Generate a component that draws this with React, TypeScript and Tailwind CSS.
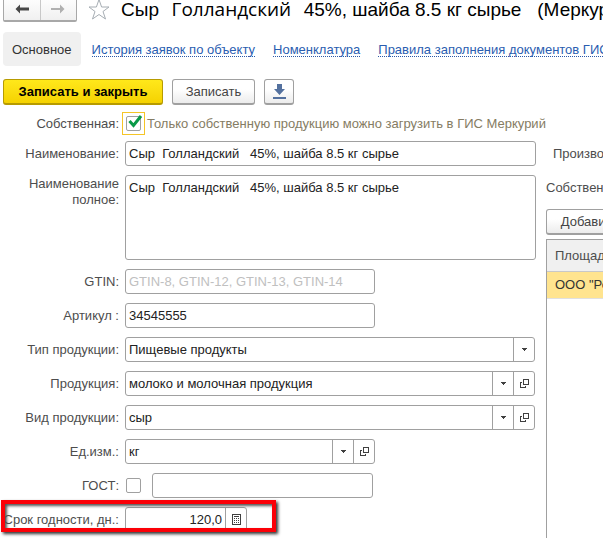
import type { ReactNode } from "react";

const buttonBase =
  "h-[26px] shrink-0 rounded-[3px] border border-[#a0a0a0] border-b-2 bg-linear-to-b from-white from-40% to-[#ececec] text-[#444]";
const fieldBox =
  "flex h-[25px] min-w-0 overflow-hidden rounded-[3px] border border-[#a0a0a0] bg-white";
const fieldText = "min-w-0 flex-1 bg-transparent px-[3px] text-[#222] outline-none";

function OpenIcon() {
  return (
    <svg width="9" height="9" viewBox="0 0 9 9" fill="none" stroke="#404040" shapeRendering="crispEdges" aria-hidden="true">
      <path d="M3.5 0.5H8.5V5.5H3.5Z" />
      <path d="M2 3.5H0.5V8.5H5.5V7" />
    </svg>
  );
}

function ArrowCell() {
  return (
    <span className="pointer-events-none flex w-[21px] shrink-0 items-center justify-center border-l border-[#a0a0a0]">
      <svg width="5" height="3" viewBox="0 0 5 3" fill="#404040" shapeRendering="crispEdges" aria-hidden="true">
        <path d="M0 0H5V1H4V2H3V3H2V2H1V1H0Z" />
      </svg>
    </span>
  );
}

function Row({ id, label, children }: { id: string; label: string; children: ReactNode }) {
  return (
    <div className="flex min-h-[25px] gap-[6px]">
      <label htmlFor={id} className="w-[119px] shrink-0 pt-[5px] text-right leading-4 whitespace-nowrap text-[#4d4d4d]">
        {label}
      </label>
      {children}
    </div>
  );
}

function SelectField({ id, value, open, width }: { id: string; value: string; open?: boolean; width: string }) {
  return (
    <div className={`${fieldBox} ${width}`}>
      <select id={id} className={`${fieldText} appearance-none`} defaultValue={value}>
        <option>{value}</option>
      </select>
      <ArrowCell />
      {open && (
        <button type="button" aria-label="Открыть" className="flex w-[21px] shrink-0 items-center justify-center border-l border-[#a0a0a0]">
          <OpenIcon />
        </button>
      )}
    </div>
  );
}

function Header() {
  return (
    <header className="flex h-[22px] items-end">
      <div className="ml-[3px] flex h-[26px] w-[74px] shrink-0 rounded-[2px] border border-b-2 border-[#a8a8a8] bg-linear-to-b from-white to-[#f0f0f0]">
        <button type="button" aria-label="Назад" className="flex flex-1 items-center justify-center border-r border-[#c8c8c8]">
          <svg width="14" height="10" viewBox="0 0 14 10" aria-hidden="true">
            <path d="M5 0.5L0.5 5L5 9.5V6.5H14V3.5H5Z" fill="#484848" />
          </svg>
        </button>
        <button type="button" aria-label="Вперед" className="flex flex-1 items-center justify-center">
          <svg width="14" height="10" viewBox="0 0 14 10" aria-hidden="true">
            <path d="M9 0.5L13.5 5L9 9.5V6H0V4H9Z" fill="#b0b0b0" />
          </svg>
        </button>
      </div>
      <button type="button" aria-label="В избранное" className="ml-[11px] shrink-0">
        <svg width="22" height="23" viewBox="0 0 22 23" fill="none" stroke="#a6adb3" aria-hidden="true">
          <path d="M11 0.500L13.6 8H21L15 12.500L17.5 20L11 15.500L4.5 20L7 12.500L1 8H8.4Z" />
        </svg>
      </button>
      <h1 className="ml-[11px] pb-[2px] text-[19px] leading-5 whitespace-pre text-black">
        Сыр{"  "}
        <span className="mx-[2px] font-['Open_Sans','Noto_Sans',sans-serif] leading-none font-medium">Голландский</span>
        {"  "}45%, шайба 8.5 кг сырье{"   "}(Меркурий)
      </h1>
    </header>
  );
}

const links = ["История заявок по объекту", "Номенклатура", "Правила заполнения документов ГИС"];

function Tabs() {
  return (
    <nav className="mt-[10px] flex h-[34px] items-center gap-[18px] pl-[3px] whitespace-nowrap">
      <span className="-mr-[7px] flex h-[34px] items-center rounded-[4px] bg-[#f0f0f0] px-[9px] pt-[2px] text-[#333]">Основное</span>
      {links.map((text) => (
        <a key={text} href="#" className="border-b border-dotted border-[#2a58a8] pt-[2px] leading-[12px] text-[#2a5db0]">
          {text}
        </a>
      ))}
    </nav>
  );
}

function Toolbar() {
  return (
    <div className="mt-[13px] flex gap-[9px] pl-[3px]">
      <button
        type="button"
        className="h-[26px] w-[160px] rounded-[3px] border border-b-2 border-[#b79b00] bg-linear-to-b from-[#ffe81a] to-[#f5d200] font-bold text-black"
      >
        Записать и закрыть
      </button>
      <button type="button" className={`${buttonBase} w-[83px]`}>Записать</button>
      <button type="button" aria-label="Загрузить" className={`${buttonBase} flex w-[30px] items-center justify-center`}>
        <svg width="13" height="15" viewBox="0 0 13 15" fill="#54719f" aria-hidden="true">
          <path d="M4 0H9V5H12L6.500 11L1 5H4Z" />
          <path d="M0 13H13V15H0Z" />
        </svg>
      </button>
    </div>
  );
}

const product = "Сыр  Голландский   45%, шайба 8.5 кг сырье";

function ProductForm() {
  return (
    <form className="flex w-[536px] shrink-0 flex-col gap-[9px]">
      <Row id="name" label="Наименование:">
        <div className={`${fieldBox} w-[411px]`}>
          <input id="name" className={fieldText} defaultValue={product} />
        </div>
      </Row>
      <div className="flex gap-[6px]">
        <label htmlFor="full" className="w-[119px] shrink-0 pt-px text-right leading-4 text-[#4d4d4d]">
          Наименование полное:
        </label>
        <textarea
          id="full"
          className="h-[85px] w-[411px] resize-none rounded-[3px] border border-[#a0a0a0] px-[3px] py-[4px] leading-4 text-[#222] outline-none"
          defaultValue={product}
        />
      </div>
      <Row id="gtin" label="GTIN:">
        <div className={`${fieldBox} w-[250px]`}>
          <input id="gtin" className={`${fieldText} placeholder:text-[#c0c0c0]`} placeholder="GTIN-8, GTIN-12, GTIN-13, GTIN-14" />
        </div>
      </Row>
      <Row id="article" label="Артикул :">
        <div className={`${fieldBox} w-[250px]`}>
          <input id="article" className={fieldText} defaultValue="34545555" />
        </div>
      </Row>
      <Row id="type" label="Тип продукции:">
        <SelectField id="type" value="Пищевые продукты" width="w-[410px]" />
      </Row>
      <Row id="product" label="Продукция:">
        <SelectField id="product" value="молоко и молочная продукция" width="w-[410px]" open />
      </Row>
      <Row id="kind" label="Вид продукции:">
        <SelectField id="kind" value="сыр" width="w-[410px]" open />
      </Row>
      <Row id="unit" label="Ед.изм.:">
        <SelectField id="unit" value="кг" width="w-[250px]" open />
      </Row>
      <Row id="gost" label="ГОСТ:">
        <div className="flex items-center gap-[11px] pl-px">
          <input id="gost" type="checkbox" className="size-[15px] appearance-none rounded-[2px] border border-[#a0a0a0]" />
          <div className={`${fieldBox} w-[221px]`}>
            <input aria-label="Номер ГОСТ" className={fieldText} />
          </div>
        </div>
      </Row>
      <div className="relative">
        <Row id="life" label="Срок годности, дн.:">
          <div className={`${fieldBox} w-[122px]`}>
            <input id="life" className={`${fieldText} text-right`} defaultValue="120,0" />
            <button type="button" aria-label="Калькулятор" className="flex w-[21px] shrink-0 items-center justify-center border-l border-[#a0a0a0]">
              <svg width="9" height="11" viewBox="0 0 9 11" shapeRendering="crispEdges" aria-hidden="true">
                <path d="M0.500 0.500H8.500V10.500H0.500Z" fill="none" stroke="#404040" />
                <path d="M2 2H7V3H2ZM2 4H3V5H2ZM4 4H5V5H4ZM6 4H7V5H6ZM2 6H3V7H2ZM4 6H5V7H4ZM6 6H7V7H6ZM2 8H3V9H2ZM4 8H5V9H4ZM6 8H7V9H6Z" fill="#404040" />
              </svg>
            </button>
          </div>
        </Row>
        <div className="pointer-events-none absolute -top-[7px] left-px h-[32px] w-[275px] border-4 border-[#fb0007] shadow-[2px_2px_3px_#333,inset_2px_2px_3px_#555]" />
      </div>
    </form>
  );
}

function Sites() {
  return (
    <section className="flex min-w-0 flex-1 flex-col overflow-hidden pl-[10px] whitespace-nowrap text-[#4d4d4d]">
      <p className="pt-[5px] pl-[7px] leading-4">Производитель:</p>
      <p className="mt-[18px] leading-4">Собственные площадки</p>
      <button type="button" className={`${buttonBase} mt-[13px] w-[87px]`}>Добавить</button>
      <div className="mt-[4px] flex-1 border-t border-l border-[#a0a0a0]">
        <table className="w-full border-collapse text-left">
          <thead>
            <tr className="h-[31px] border-b border-[#c8c8c8] bg-[#f0f0f0]">
              <th className="pl-[8px] font-normal">Площадка</th>
            </tr>
          </thead>
          <tbody>
            <tr className="h-[27px] border-b border-[#e0e0e0] bg-[#ffe48f] text-[#333]">
              <td className="pl-[8px]">ООО "Ромашка"</td>
            </tr>
          </tbody>
        </table>
      </div>
    </section>
  );
}

export default function App() {
  return (
    <main className="flex h-screen flex-col overflow-hidden bg-white font-['Liberation_Sans',Arial,sans-serif] text-[13px]">
      <Header />
      <Tabs />
      <Toolbar />
      <div className="mt-[7px] flex h-[23px] items-center">
        <label htmlFor="own" className="w-[119px] text-right text-[#4d4d4d]">Собственная:</label>
        <span className="relative ml-[3px] flex size-[23px] items-center justify-center border border-[#f5c527]">
          <input id="own" type="checkbox" defaultChecked className="size-[15px] appearance-none rounded-[2px] border border-[#a0a0a0]" />
          <svg className="pointer-events-none absolute top-[2px] left-[5px]" width="15" height="13" viewBox="0 0 15 13" fill="none" stroke="#0a9a48" strokeWidth="3" aria-hidden="true">
            <path d="M1.500 6L5.500 10.500L13 1" />
          </svg>
        </span>
        <span className="ml-[2px] whitespace-nowrap text-[#857c63]">Только собственную продукцию можно загрузить в ГИС Меркурий</span>
      </div>
      <div className="mt-[6px] flex min-h-0 flex-1">
        <ProductForm />
        <Sites />
      </div>
    </main>
  );
}
